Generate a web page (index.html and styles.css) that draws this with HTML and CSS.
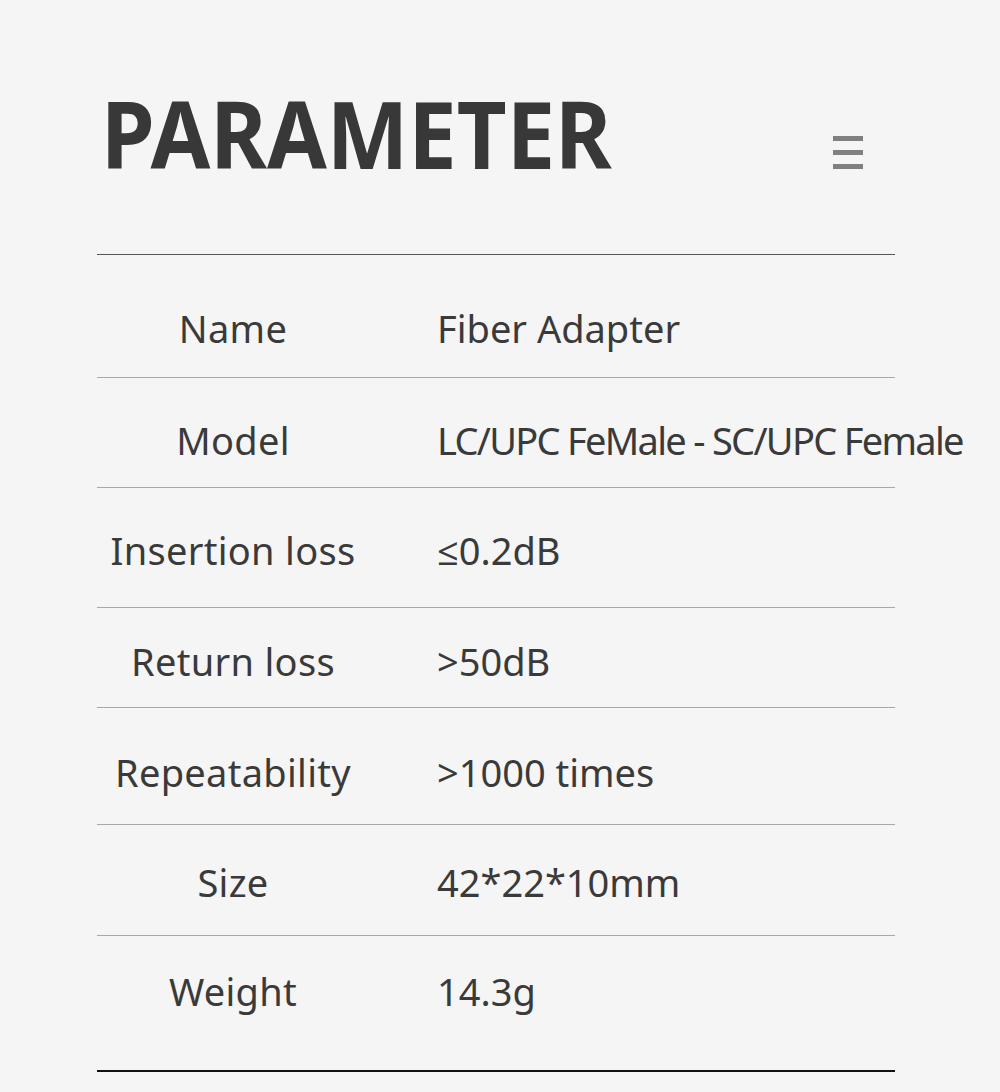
FILE: index.html
```html
<!DOCTYPE html>
<html lang="en">
<head>
<meta charset="utf-8">
<title>Parameter</title>
<link rel="stylesheet" href="styles.css">
</head>
<body>
<div class="page">
  <header class="header">
    <h1 class="title">PARAMETER</h1>
    <div class="menu" aria-label="menu">
      <span class="bar"></span><span class="bar"></span><span class="bar"></span>
    </div>
  </header>
  <div class="table">
    <div class="row r1"><div class="label">Name</div><div class="value">Fiber Adapter</div></div>
    <div class="row r2"><div class="label">Model</div><div class="value model">LC/UPC FeMale - SC/UPC Female</div></div>
    <div class="row r3"><div class="label">Insertion loss</div><div class="value">≤0.2dB</div></div>
    <div class="row r4"><div class="label">Return loss</div><div class="value">&gt;50dB</div></div>
    <div class="row r5"><div class="label">Repeatability</div><div class="value">&gt;1000 times</div></div>
    <div class="row r6"><div class="label">Size</div><div class="value">42*22*10mm</div></div>
    <div class="row r7"><div class="label">Weight</div><div class="value">14.3g</div></div>
  </div>
</div>
</body>
</html>
```

FILE: styles.css
```css
html, body {
  margin: 0;
  padding: 0;
  background: #f5f5f5;
}
body {
  font-family: "Noto Sans", "Open Sans", sans-serif;
  color: #3a3a3a;
}
.page {
  width: 798px;
  margin-left: 97px;
}
.header {
  height: 254px;
  display: flex;
  align-items: flex-start;
  justify-content: space-between;
  border-bottom: 1px solid #555;
}
.title {
  margin: 86px 0 0 4px;
  font-size: 94px;
  line-height: 1;
  font-weight: 700;
  color: #383838;
  letter-spacing: 0;
  transform: scaleX(0.92);
  transform-origin: left center;
}
.menu {
  margin: 136px 32px 0 0;
  width: 30px;
  display: flex;
  flex-direction: column;
  gap: 9px;
}
.bar {
  display: block;
  height: 5px;
  background: #808080;
}
.row {
  display: grid;
  grid-template-columns: 272px 1fr;
  border-bottom: 1px solid #a8a8a8;
  font-size: 38px;
  line-height: 40px;
}
.label {
  text-align: center;
  white-space: nowrap;
  letter-spacing: 0.3px;
}
.value {
  padding-left: 68px;
  white-space: nowrap;
}
.model {
  letter-spacing: -1.7px;
}
.r1 { padding: 53px 0 29px; }
.r2 { padding: 42px 0 27px; }
.r3 { padding: 42px 0 37px; }
.r4 { padding: 33px 0 26px; }
.r5 { padding: 44px 0 32px; }
.r6 { padding: 37px 0 33px; }
.r7 { padding: 35px 0 59px; border-bottom: 2px solid #111; }
```
